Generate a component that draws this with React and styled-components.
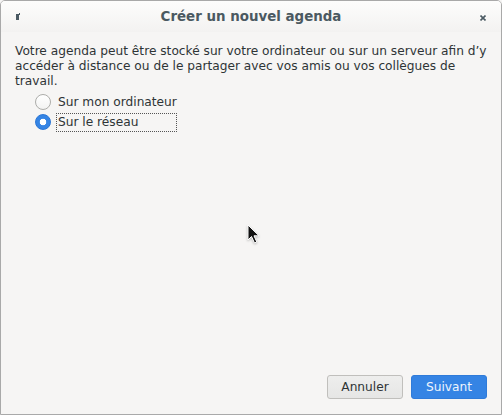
import React from 'react';
import styled, { createGlobalStyle } from 'styled-components';

const GlobalStyle = createGlobalStyle`
  html, body {
    margin: 0;
    padding: 0;
    background: #f6f5f4;
  }
  * {
    box-sizing: border-box;
  }
`;

const App = () => {
  const [choice, setChoice] = React.useState('network');

  return (
    <Window>
      <GlobalStyle />
      <TitleBar>
        <AppIcon />
        <Title>Créer un nouvel agenda</Title>
        <CloseButton aria-label="Fermer">
          <svg width="6" height="6" viewBox="0 0 6 6">
            <path d="M0.5 0.5 L5.5 5.5 M5.5 0.5 L0.5 5.5" stroke="#4b5a63" strokeWidth="1.6" />
          </svg>
        </CloseButton>
      </TitleBar>
      <Body>
        <Intro>
          Votre agenda peut être stocké sur votre ordinateur ou sur un serveur afin d’y
          accéder à distance ou de le partager avec vos amis ou vos collègues de
          travail.
        </Intro>
        <Options>
          <Option>
            <Radio checked={choice === 'local'} onClick={() => setChoice('local')} />
            <Label>Sur mon ordinateur</Label>
          </Option>
          <Option>
            <Radio checked={choice === 'network'} onClick={() => setChoice('network')} />
            <Label focused>Sur le réseau</Label>
          </Option>
        </Options>
      </Body>
      <Footer>
        <Button>Annuler</Button>
        <Button primary>Suivant</Button>
      </Footer>
      <Cursor width="14" height="21" viewBox="0 0 14 21">
        <path d="M1 1 L1 16 L4.5 12.5 L7.5 19 L9.8 18 L7 11.8 L12 11.8 Z" fill="#111" stroke="#fff" strokeWidth="1" />
      </Cursor>
    </Window>
  );
};

export default App;

const Window = styled.div`
  position: relative;
  width: 502px;
  height: 415px;
  display: flex;
  flex-direction: column;
  background: #f6f5f4;
  border: 1px solid #a9a9a9;
  border-radius: 5px 5px 0 0;
  overflow: hidden;
  font-family: 'DejaVu Sans', sans-serif;
  color: #2e3436;
`;

const TitleBar = styled.div`
  height: 31px;
  display: flex;
  align-items: center;
  padding: 0 15px 0 15px;
  background: linear-gradient(#fdfdfc, #f3f2f1);
`;

const AppIcon = styled.span`
  width: 4px;
  height: 6px;
  margin-top: 1px;
  background: linear-gradient(to right, #4b5a63 3px, transparent 3px);
  position: relative;
  &::after {
    content: '';
    position: absolute;
    right: 0;
    top: -1px;
    width: 1px;
    height: 2px;
    background: #4b5a63;
  }
`;

const Title = styled.div`
  flex: 1;
  text-align: center;
  font-weight: bold;
  font-size: 13.4px;
  color: #4b5961;
  margin-top: -1px;
  padding-left: 2px;
`;

const CloseButton = styled.span`
  display: flex;
  width: 6px;
  height: 6px;
  margin-top: 3px;
`;

const Body = styled.div`
  flex: 1;
  padding: 12px 14px 0 14px;
`;

const Intro = styled.p`
  margin: 0;
  font-size: 12.2px;
  line-height: 15px;
`;

const Options = styled.div`
  display: flex;
  flex-direction: column;
  padding: 3px 0 0 20px;
`;

const Option = styled.div`
  display: flex;
  align-items: center;
  gap: 6px;
  height: 20px;
`;

const Radio = styled.span`
  width: 16px;
  height: 16px;
  border-radius: 50%;
  flex: none;
  cursor: pointer;
  border: ${(props) => (props.checked ? '1px solid #2a76d6' : '1px solid #adadaa')};
  background: ${(props) =>
    props.checked
      ? 'radial-gradient(circle, #ffffff 0 3px, #3584e4 3.6px)'
      : 'linear-gradient(#ffffff, #f3f3f2)'};
`;

const Label = styled.span`
  font-size: 12.2px;
  line-height: 15px;
  padding: 0 1px;
  outline: ${(props) => (props.focused ? '1px dotted #555' : 'none')};
  outline-offset: 0;
  ${(props) => (props.focused ? 'width: 119px; height: 17px; padding-top: 1px;' : '')}
`;

const Footer = styled.div`
  display: flex;
  justify-content: flex-end;
  gap: 8px;
  padding: 0 14px 15px 0;
`;

const Button = styled.button`
  width: 76px;
  height: 24px;
  border-radius: 3px;
  font-family: 'DejaVu Sans', sans-serif;
  font-size: 12.2px;
  cursor: pointer;
  border: 1px solid ${(props) => (props.primary ? '#2f7bd9' : '#c0bfbc')};
  background: ${(props) => (props.primary ? '#3584e4' : 'linear-gradient(#eeeeed, #e6e6e5)')};
  color: ${(props) => (props.primary ? '#eef4fc' : '#2e3436')};
`;

const Cursor = styled.svg`
  position: absolute;
  left: 246px;
  top: 223px;
  pointer-events: none;
  filter: drop-shadow(0 1px 1px rgba(0, 0, 0, 0.25));
`;
